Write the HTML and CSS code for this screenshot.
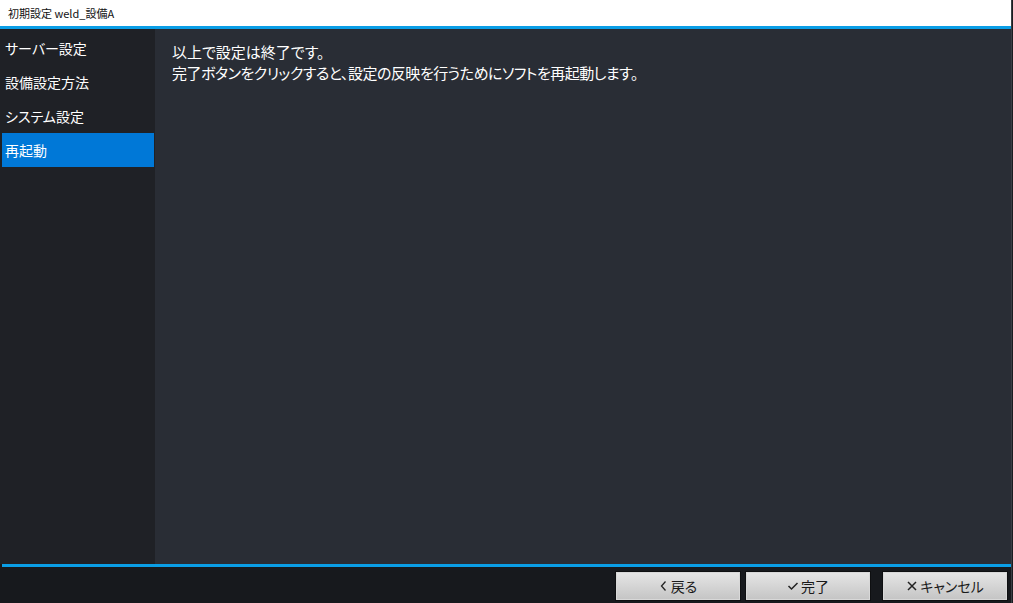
FILE: index.html
```html
<!DOCTYPE html>
<html lang="ja">
<head>
<meta charset="utf-8">
<link rel="stylesheet" href="styles.css">
</head>
<body>
<div class="window">
  <div class="titlebar">初期設定 weld_設備A</div>
  <div class="accent"></div>
  <div class="main">
    <nav class="sidebar">
      <div class="nav-item">サーバー設定</div>
      <div class="nav-item">設備設定方法</div>
      <div class="nav-item">システム設定</div>
      <div class="nav-item active">再起動</div>
    </nav>
    <section class="content">
      <p>以上で設定は終了です。</p>
      <p class="tight">完了ボタンをクリックすると、設定の反映を行うためにソフトを再起動します。</p>
    </section>
  </div>
  <div class="accent bottom"></div>
  <footer class="footer">
    <button class="btn"><svg width="10" height="12" viewBox="0 0 10 12"><path d="M6.5 1.5 L2.5 6 L6.5 10.5" fill="none" stroke="#222" stroke-width="1.3"/></svg><span>戻る</span></button>
    <button class="btn"><svg width="12" height="12" viewBox="0 0 12 12"><path d="M1.5 6 L4.5 9 L10.5 3" fill="none" stroke="#222" stroke-width="1.5"/></svg><span>完了</span></button>
    <button class="btn cancel"><svg width="12" height="12" viewBox="0 0 12 12"><path d="M2 2 L10 10 M10 2 L2 10" fill="none" stroke="#222" stroke-width="1.5"/></svg><span>キャンセル</span></button>
  </footer>
</div>
</body>
</html>
```

FILE: styles.css
```css
* { box-sizing: border-box; }
html, body {
  margin: 0;
  padding: 0;
  width: 1013px;
  height: 603px;
  overflow: hidden;
  background: #1a1c20;
}
body {
  font-family: "Noto Sans CJK JP", "Noto Sans", sans-serif;
  font-feature-settings: "palt";
}
.window {
  width: 1012px;
  height: 603px;
  display: flex;
  flex-direction: column;
  border-right: 1px solid #3a3e44;
  background: #17191d;
}
.titlebar {
  height: 26px;
  background: #ffffff;
  color: #111;
  font-size: 11px;
  line-height: 26px;
  padding-left: 8px;
}
.accent {
  height: 3px;
  background: #0a9ee6;
}
.accent.bottom {
  margin: 0 0 0 2px;
}
.main {
  height: 535px;
  display: flex;
}
.sidebar {
  width: 155px;
  background: #1f2126;
  padding: 2px 1px 0 2px;
  display: flex;
  flex-direction: column;
}
.nav-item {
  height: 34px;
  line-height: 34px;
  padding-left: 3px;
  color: #ffffff;
  font-size: 14px;
}
.nav-item.active {
  background: #0078d7;
}
.content {
  flex: 1;
  background: #292d35;
  padding: 12px 17px;
  color: #ffffff;
  font-size: 15px;
  line-height: 21px;
}
.content p {
  margin: 0;
}
.content p.tight {
  letter-spacing: -0.5px;
}
.footer {
  flex: 1;
  display: flex;
  justify-content: flex-end;
  align-items: flex-start;
  padding: 4px 3px 0 0;
  gap: 4px;
}
.btn {
  width: 126px;
  height: 30px;
  border: 1px solid #0e0f11;
  box-shadow: inset 0 0 0 1px #d8d8d8;
  background: linear-gradient(#e6e6e6, #c4c4c4);
  display: flex;
  align-items: center;
  justify-content: center;
  gap: 2px;
  font-family: "Noto Sans CJK JP", sans-serif;
  font-feature-settings: "palt";
  font-size: 14px;
  color: #1a1a1a;
  padding: 0;
}
.btn svg { display: block; }
.btn.cancel {
  margin-left: 7px;
}
```
